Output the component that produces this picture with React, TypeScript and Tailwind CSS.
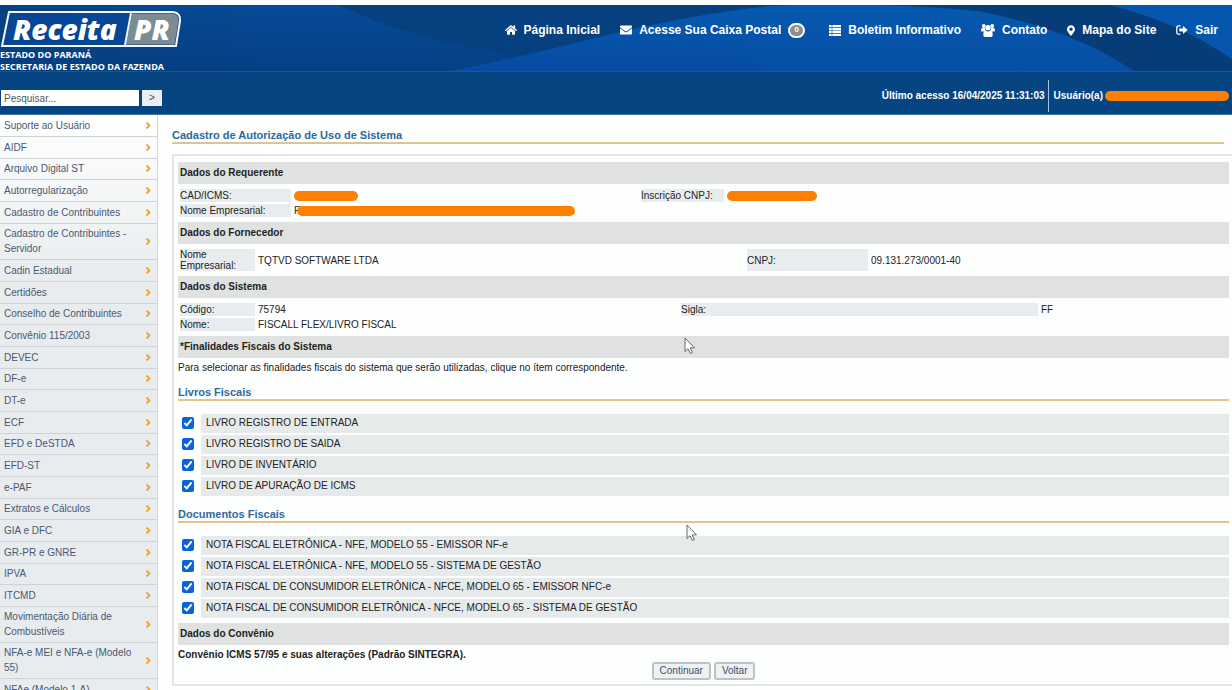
import { ReactNode } from "react";
import { FaEnvelope, FaHome, FaMapMarkerAlt } from "react-icons/fa";

const menuItems = [
  "Suporte ao Usuário",
  "AIDF",
  "Arquivo Digital ST",
  "Autorregularização",
  "Cadastro de Contribuintes",
  "Cadastro de Contribuintes - Servidor",
  "Cadin Estadual",
  "Certidões",
  "Conselho de Contribuintes",
  "Convênio 115/2003",
  "DEVEC",
  "DF-e",
  "DT-e",
  "ECF",
  "EFD e DeSTDA",
  "EFD-ST",
  "e-PAF",
  "Extratos e Cálculos",
  "GIA e DFC",
  "GR-PR e GNRE",
  "IPVA",
  "ITCMD",
  "Movimentação Diária de Combustíveis",
  "NFA-e MEI e NFA-e (Modelo 55)",
  "NFAe (Modelo 1-A)",
];

const livros = [
  "LIVRO REGISTRO DE ENTRADA",
  "LIVRO REGISTRO DE SAIDA",
  "LIVRO DE INVENTÁRIO",
  "LIVRO DE APURAÇÃO DE ICMS",
];

const documentos = [
  "NOTA FISCAL ELETRÔNICA - NFE, MODELO 55 - EMISSOR NF-e",
  "NOTA FISCAL ELETRÔNICA - NFE, MODELO 55 - SISTEMA DE GESTÃO",
  "NOTA FISCAL DE CONSUMIDOR ELETRÔNICA - NFCE, MODELO 65 - EMISSOR NFC-e",
  "NOTA FISCAL DE CONSUMIDOR ELETRÔNICA - NFCE, MODELO 65 - SISTEMA DE GESTÃO",
];

function HeaderWaves() {
  return (
    <svg
      className="absolute inset-x-0 top-0 h-[66px] w-full"
      viewBox="0 0 1232 66"
      preserveAspectRatio="none"
      aria-hidden="true"
    >
      <defs>
        <linearGradient id="base" x1="0" y1="0" x2="0" y2="1">
          <stop offset="0" stopColor="#054b98" />
          <stop offset="1" stopColor="#063f82" />
        </linearGradient>
        <linearGradient id="shade" x1="0" y1="0" x2="1" y2="0">
          <stop offset="0" stopColor="#063f7d" stopOpacity="0.8" />
          <stop offset="1" stopColor="#063f7d" stopOpacity="0" />
        </linearGradient>
        <linearGradient id="wave" x1="0" y1="0" x2="0" y2="1">
          <stop offset="0" stopColor="#055bb0" />
          <stop offset="1" stopColor="#064ba2" />
        </linearGradient>
      </defs>
      <rect width="1232" height="66" fill="url(#base)" />
      <rect width="260" height="66" fill="url(#shade)" />
      <path d="M338 0 Q420 38 522 50 L600 66 H1232 V0 Z" fill="#06407e" />
      <path d="M450 66 C560 46 640 15 770 1 Q880 -4 985 7 Q1070 24 1134 66 Z" fill="url(#wave)" />
      <path d="M700 10 Q740 36 765 66 H1134 Q1070 24 985 7 Q860 -6 745 4 Z" fill="#0a55ad" opacity="0.35" />
      <path d="M945 0 Q1070 20 1134 66 H1232 V0 Z" fill="#063d78" />
      <path d="M1110 0 Q1180 18 1232 54 V0 Z" fill="#0557ae" />
    </svg>
  );
}

function Logo() {
  return (
    <a href="#" className="block text-white" aria-label="Receita PR">
      <svg className="block h-[38px] w-[182px]" viewBox="0 0 182 38">
        <path d="M9 1 H173 Q181 2 180 10 L176 35 H2 Z" fill="#064695" stroke="#f2f6fa" strokeWidth="2" />
        <path d="M132 2.500 H172 Q179 3 178.500 10 L174.500 33.500 H126 Z" fill="#7d8c93" />
        <path d="M131 2 L125 34" stroke="#f2f6fa" strokeWidth="2" />
        <g fill="#fff" fontFamily="'Open Sans', sans-serif" fontWeight="800" fontStyle="italic" fontSize="28">
          <text x="13" y="29">Receita</text>
          <text x="134" y="29">PR</text>
        </g>
      </svg>
      <span className="block font-['Open_Sans',sans-serif] text-[9px] leading-[12px] font-bold whitespace-nowrap">
        ESTADO DO PARANÁ
        <br />
        SECRETARIA DE ESTADO DA FAZENDA
      </span>
    </a>
  );
}

function ListIcon() {
  return (
    <svg className="h-[11px] w-3" viewBox="0 0 12 11" fill="currentColor" aria-hidden="true">
      <path d="M0 0h2.700v2.300H0zM3.300 0H12v2.300H3.300zM0 2.900h2.700v2.300H0zM3.300 2.900H12v2.300H3.300zM0 5.800h2.700v2.300H0zM3.300 5.800H12v2.300H3.300zM0 8.700h2.700V11H0zM3.300 8.700H12V11H3.300z" />
    </svg>
  );
}

function GroupIcon() {
  return (
    <svg className="h-[13px] w-[14px]" viewBox="0 0 14 13" fill="currentColor" aria-hidden="true">
      <circle cx="2.800" cy="2" r="1.900" />
      <circle cx="11.200" cy="2" r="1.900" />
      <circle cx="7" cy="3.700" r="2.600" />
      <path d="M0 6.500Q0 4 1.300 4H4Q4 6 5 6.800L3.500 7.500H1Q0 7.500 0 6.500ZM14 6.500Q14 4 12.700 4H10Q10 6 9 6.800L10.500 7.500H13Q14 7.500 14 6.500Z" />
      <path d="M2.300 11Q2.300 6.800 4.500 6.800Q7 8.200 9.500 6.800Q11.700 6.800 11.700 11Q11.700 13 10 13H4Q2.300 13 2.300 11Z" />
    </svg>
  );
}

function SignOutIcon() {
  return (
    <svg className="h-[10px] w-3" viewBox="0 0 12 10" aria-hidden="true">
      <path d="M4.500 0.800H2.500Q0.800 0.800 0.800 2.500V7.500Q0.800 9.200 2.500 9.200H4.500" fill="none" stroke="currentColor" strokeWidth="1.300" />
      <path d="M3.300 3.400H7V1L11.700 5L7 9V6.600H3.300Z" fill="currentColor" />
    </svg>
  );
}

function NavLink({ icon, children }: { icon: ReactNode; children: ReactNode }) {
  return (
    <a href="#" className="flex items-center gap-[7px] whitespace-nowrap">
      {icon}
      {children}
    </a>
  );
}

function Redacted({ className }: { className: string }) {
  return <span className={`inline-block h-[10px] shrink-0 rounded-full bg-[#ff8000] ${className}`} />;
}

function SectionBar({ children }: { children: ReactNode }) {
  return (
    <h2 className="h-[22px] bg-[#e0e2e2] px-[2px] text-[10px] leading-[22px] font-bold text-[#222]">{children}</h2>
  );
}

function Label({ children }: { children: ReactNode }) {
  return <dt className="flex items-center bg-[#e8ecee]">{children}</dt>;
}

function Value({ children }: { children?: ReactNode }) {
  return <dd className="flex items-center">{children}</dd>;
}

function SubTitle({ children }: { children: ReactNode }) {
  return (
    <h3 className="border-b-2 border-[#e5c58b] text-[11px] leading-[14px] font-bold text-[#2f6a9c]">{children}</h3>
  );
}

function CheckList({ items, name }: { items: string[]; name: string }) {
  return (
    <div className="flex flex-col gap-[2px]">
      {items.map((item, i) => (
        <div key={item} className="flex h-[19px] items-start">
          <input
            id={`${name}-${i}`}
            type="checkbox"
            defaultChecked
            className="mx-1 mt-[3px] size-3 shrink-0 accent-[#0a62dd]"
          />
          <label
            htmlFor={`${name}-${i}`}
            className="ml-[3px] h-full flex-1 bg-[#e7eaeb] px-[5px] text-[10px] leading-[18px] text-[#222]"
          >
            {item}
          </label>
        </div>
      ))}
    </div>
  );
}

function Cursor({ className }: { className: string }) {
  return (
    <svg className={`absolute h-[18px] w-[12px] ${className}`} viewBox="0 0 12 18" aria-hidden="true">
      <path
        d="M1 1 V14.500 L4 11.700 L6.300 16.500 L8.400 15.500 L6.200 10.900 H10.500 Z"
        fill="#fff"
        stroke="#666"
        strokeWidth="1"
      />
    </svg>
  );
}

export default function App() {
  return (
    <div className="relative flex h-screen flex-col overflow-hidden bg-[#fdfefe] pt-[5px] font-['Liberation_Sans',Arial,sans-serif] text-[#222]">
      {/* Header */}
      <header className="relative shrink-0 border-b border-[#3f73a6] bg-[#064482] text-white">
        <HeaderWaves />
        <div className="relative flex h-[66px] items-start justify-between pt-[6px]">
          <Logo />
          <nav className="mt-[11px] flex items-center gap-5 pr-[14px] text-[12px] leading-[16px] font-bold">
            <NavLink icon={<FaHome className="size-3" />}>Página Inicial</NavLink>
            <NavLink icon={<FaEnvelope className="size-3" />}>
              Acesse Sua Caixa Postal
              <span className="mr-1 flex h-[15px] w-[17px] items-center justify-center rounded-full border-2 border-white bg-[#8b8f93] text-[8px] leading-[10px]">
                0
              </span>
            </NavLink>
            <NavLink icon={<ListIcon />}>Boletim Informativo</NavLink>
            <NavLink icon={<GroupIcon />}>Contato</NavLink>
            <NavLink icon={<FaMapMarkerAlt className="h-[11px] w-2" />}>Mapa do Site</NavLink>
            <NavLink icon={<SignOutIcon />}>Sair</NavLink>
          </nav>
        </div>

        <div className="relative flex h-[43px] items-center justify-between border-t border-[#1c5692]">
          <form className="mt-[10px] flex gap-[3px] pl-px">
            <input
              type="text"
              aria-label="Pesquisar"
              placeholder="Pesquisar..."
              className="h-4 w-[138px] bg-white px-[3px] text-[10px] text-[#333] placeholder:text-[#4b5a6b]"
            />
            <button type="button" className="h-4 w-5 bg-[#eceef1] text-[10px] leading-[16px] text-[#444]">
              &gt;
            </button>
          </form>
          <div className="mt-[5px] flex items-center pr-[3px] text-[10px] font-bold">
            <span>Último acesso 16/04/2025 11:31:03</span>
            <span className="mx-[3px] h-8 w-px bg-[#a9c3dd]" />
            <span className="px-[2px]">Usuário(a)</span>
            <Redacted className="w-[124px]" />
          </div>
        </div>
      </header>

      <div className="flex min-h-0 flex-1">
        {/* Side menu */}
        <nav className="w-[158px] shrink-0 border-r border-[#d3d6d8] bg-[linear-gradient(#ffffff,#e8ecee_170px)]">
          <ul>
            {menuItems.map((item) => (
              <li key={item} className="flex min-h-[22px] border-b border-[#cfd3d6] nth-[3n]:min-h-[21px]">
                <a
                  href="#"
                  className="flex flex-1 items-center justify-between pt-[2px] pr-[6px] pb-[3px] pl-1 text-[10px] leading-[15px] text-[#4a5872]"
                >
                  <span className="w-[136px]">{item}</span>
                  <svg className="h-[7px] w-[6px]" viewBox="0 0 6 7" aria-hidden="true">
                    <path d="M1.500 0.500 L4.500 3.500 L1.500 6.500" fill="none" stroke="#f0a030" strokeWidth="1.800" />
                  </svg>
                </a>
              </li>
            ))}
          </ul>
        </nav>

        {/* Content */}
        <main className="min-w-0 flex-1 pt-[13px] pl-[14px]">
          <h1 className="mr-2 border-b-2 border-[#dcc594] text-[11px] leading-[14px] font-bold text-[#2a6a9e]">
            Cadastro de Autorização de Uso de Sistema
          </h1>

          <section className="mt-[10px] border-y-2 border-l-2 border-[#e3e4e4] pt-[6px] pr-[3px] pb-1 pl-1">
            <SectionBar>Dados do Requerente</SectionBar>
            <dl className="grid auto-rows-[13px] grid-cols-[111px_344fr_83px_500fr] gap-x-[3px] gap-y-[2px] px-[2px] py-[5px] text-[10px] leading-[11px]">
              <Label>CAD/ICMS:</Label>
              <Value>
                <Redacted className="w-16" />
              </Value>
              <Label>Inscrição CNPJ:</Label>
              <Value>
                <Redacted className="w-[90px]" />
              </Value>
              <Label>Nome Empresarial:</Label>
              <Value>
                <span className="w-[3px]">F</span>
                <Redacted className="w-[278px]" />
              </Value>
            </dl>

            <SectionBar>Dados do Fornecedor</SectionBar>
            <dl className="grid grid-cols-[75px_486fr_121px_356fr] gap-x-[3px] px-[2px] py-[5px] text-[10px] leading-[11px]">
              <Label>Nome Empresarial:</Label>
              <Value>TQTVD SOFTWARE LTDA</Value>
              <Label>CNPJ:</Label>
              <Value>09.131.273/0001-40</Value>
            </dl>

            <SectionBar>Dados do Sistema</SectionBar>
            <dl className="grid auto-rows-[13px] grid-cols-[75px_420fr_357fr_186fr] gap-x-[3px] gap-y-[2px] px-[2px] py-[5px] text-[10px] leading-[11px]">
              <Label>Código:</Label>
              <Value>75794</Value>
              <Label>Sigla:</Label>
              <Value>FF</Value>
              <Label>Nome:</Label>
              <Value>FISCALL FLEX/LIVRO FISCAL</Value>
            </dl>

            <SectionBar>*Finalidades Fiscais do Sistema</SectionBar>
            <p className="py-[2px] text-[10px] leading-[15px]">
              Para selecionar as finalidades fiscais do sistema que serão utilizadas, clique no ítem correspondente.
            </p>

            <div className="mt-2 mb-[13px]">
              <SubTitle>Livros Fiscais</SubTitle>
            </div>
            <CheckList items={livros} name="livro" />

            <div className="mt-[11px] mb-[13px]">
              <SubTitle>Documentos Fiscais</SubTitle>
            </div>
            <CheckList items={documentos} name="documento" />

            <div className="mt-[5px]">
              <SectionBar>Dados do Convênio</SectionBar>
            </div>
            <p className="pt-[2px] text-[10px] leading-[15px] font-bold">
              Convênio ICMS 57/95 e suas alterações (Padrão SINTEGRA).
            </p>

            <div className="flex justify-center gap-[3px] text-[10px] leading-[14px] text-[#34506e]">
              <button type="button" className="rounded-[3px] border-2 border-[#bfc2c5] bg-[#f0f1f2] px-[6px]">
                Continuar
              </button>
              <button type="button" className="rounded-[3px] border-2 border-[#bfc2c5] bg-[#f0f1f2] px-[6px]">
                Voltar
              </button>
            </div>
          </section>
        </main>
      </div>

      <Cursor className="top-[337px] left-[684px]" />
      <Cursor className="top-[524px] left-[686px]" />
    </div>
  );
}
